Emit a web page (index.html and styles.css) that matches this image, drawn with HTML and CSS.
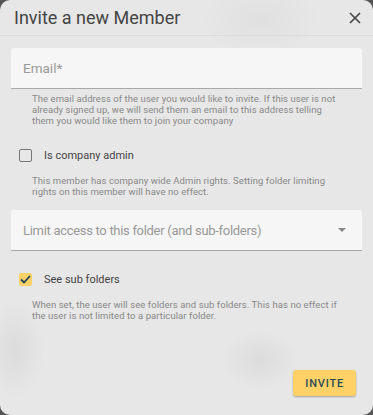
FILE: index.html
```html
<!DOCTYPE html>
<html lang="en">
<head>
  <meta charset="UTF-8">
  <meta name="viewport" content="width=device-width, initial-scale=1.0">
  <title>Invite a new Member</title>
  <link rel="stylesheet" href="styles.css">
</head>
<body>
  <div class="dialog">
    <div class="dialog-header">
      <h2 class="dialog-title">Invite a new Member</h2>
      <button type="button" class="close-btn" aria-label="Close">
        <svg width="12" height="12" viewBox="0 0 12 12"><path d="M1 1L11 11M11 1L1 11" stroke="#444" stroke-width="1.6" fill="none"/></svg>
      </button>
    </div>
    <div class="dialog-body">
      <!-- Email -->
      <div class="field">
        <div class="field-box">Email*</div>
      </div>
      <p class="hint">The email address of the user you would like to invite. If this user is not already signed up, we will send them an email to this address telling them you would like them to join your company</p>

      <!-- Admin -->
      <label class="check-row">
        <span class="checkbox"></span>
        <span class="check-label">Is company admin</span>
      </label>
      <p class="hint">This member has company wide Admin rights. Setting folder limiting rights on this member will have no effect.</p>

      <!-- Folder -->
      <div class="field">
        <div class="field-box select">
          <span class="select-text">Limit access to this folder (and sub-folders)</span>
          <span class="caret"></span>
        </div>
      </div>

      <!-- Sub folders -->
      <label class="check-row">
        <span class="checkbox checked">
          <svg width="11" height="9" viewBox="0 0 11 9"><path d="M1 4.5L4 7.5L10 1" stroke="#1f4257" stroke-width="1.8" fill="none"/></svg>
        </span>
        <span class="check-label">See sub folders</span>
      </label>
      <p class="hint">When set, the user will see folders and sub folders. This has no effect if the user is not limited to a particular folder.</p>
    </div>
    <div class="dialog-actions">
      <button type="button" class="invite-btn">Invite</button>
    </div>
  </div>
</body>
</html>
```

FILE: styles.css
```css
body {
  margin: 0;
  background: #555;
  font-family: Roboto, "Noto Sans", sans-serif;
}
.dialog {
  width: 373px;
  height: 415px;
  box-sizing: border-box;
  background:
    radial-gradient(ellipse 30px 50px at 15px 350px, rgba(0,0,0,0.05), transparent),
    radial-gradient(ellipse 40px 30px at 260px 360px, rgba(0,0,0,0.05), transparent),
    radial-gradient(ellipse 60px 40px at 260px 20px, rgba(0,0,0,0.03), transparent),
    #e7e7e7;
  border-radius: 10px;
  display: flex;
  flex-direction: column;
  overflow: hidden;
}
.dialog-header {
  display: flex;
  align-items: center;
  justify-content: space-between;
  height: 35px;
  padding: 0 10px 0 14px;
  border-bottom: 1px solid #dcdcdc;
}
.dialog-title {
  margin: 0;
  font-size: 18px;
  font-weight: 400;
  color: #444;
}
.close-btn {
  border: none;
  background: none;
  padding: 0;
  width: 16px;
  height: 16px;
  display: flex;
  align-items: center;
  justify-content: center;
  cursor: pointer;
}
.dialog-body {
  flex: 1;
  padding: 12px 11px 0 11px;
}
.field-box {
  height: 41px;
  box-sizing: border-box;
  background: #f6f6f6;
  border-bottom: 1px solid #aaa;
  border-radius: 3px 3px 0 0;
  padding: 0 12px;
  display: flex;
  align-items: center;
  font-size: 13.5px;
  color: #999;
}
.field-box.select {
  justify-content: space-between;
}
.select-text {
  font-size: 13px;
  letter-spacing: -0.3px;
}
.caret {
  width: 0;
  height: 0;
  border-left: 4px solid transparent;
  border-right: 4px solid transparent;
  border-top: 4px solid #888;
  margin-right: 4px;
}
.hint {
  width: 306px;
  margin: 4px 0 0 21px;
  font-size: 9.5px;
  line-height: 11px;
  letter-spacing: 0.07px;
  color: #888;
}
.check-row {
  display: flex;
  align-items: center;
  height: 14px;
  margin: 22px 0 0 8px;
  cursor: pointer;
}
.checkbox {
  width: 13px;
  height: 13px;
  box-sizing: border-box;
  border: 1px solid #777;
  border-radius: 2px;
  display: flex;
  align-items: center;
  justify-content: center;
}
.checkbox svg {
  display: block;
}
.checkbox.checked {
  background: #ffd166;
  border-color: #ffd166;
}
.check-label {
  margin-left: 12px;
  font-size: 11px;
  color: #444;
}
.check-row + .hint {
  margin-top: 13px;
}
.hint + .field {
  margin-top: 13px;
}
.field + .check-row {
  margin-top: 21px;
}
.dialog-actions {
  display: flex;
  justify-content: flex-end;
  padding: 0 17px 19px;
}
.invite-btn {
  background: #ffd166;
  border: none;
  border-radius: 3px;
  padding: 0 12px;
  height: 26px;
  min-width: 62px;
  font-family: Roboto, sans-serif;
  font-size: 11px;
  font-weight: 500;
  letter-spacing: 0.8px;
  text-transform: uppercase;
  color: #2b4a56;
  box-shadow: 0 1px 2px rgba(0,0,0,0.3);
  cursor: pointer;
}
```
